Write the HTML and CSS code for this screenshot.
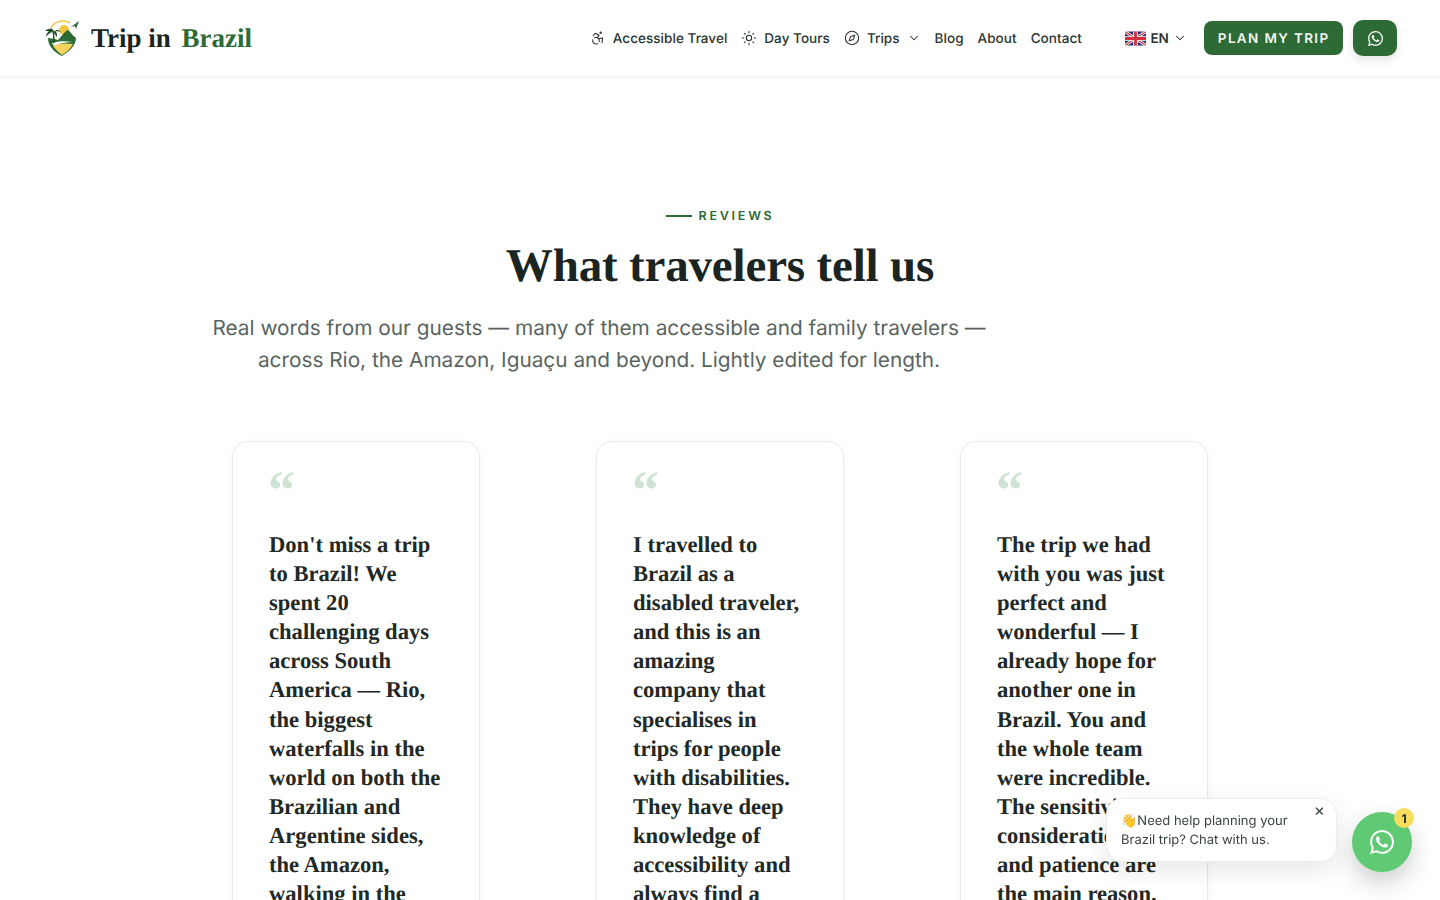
FILE: index.html
```html
<!DOCTYPE html>
<html lang="en">
<head>
<meta charset="utf-8">
<title>Trip in Brazil</title>
<link rel="stylesheet" href="styles.css">
</head>
<body>
<header class="header">
  <a class="logo" href="#">
    <svg class="logo-mark" viewBox="0 0 36 38" width="36" height="38">
      <path d="M6 12C8 5 13 2 19 2c3 0 5 .7 7 2" fill="none" stroke="#e9c64f" stroke-width="1.6"/>
      <circle cx="20" cy="11" r="5" fill="#f2c73f"/>
      <path d="M5 17h26c1 0 2 1 2 2 0 8-7 14-15 18C10 33 3 27 3 19c0-1 1-2 2-2z" fill="#fff"/>
      <path d="M4 19c3 0 7 1 10 2 3-3 7-9 10-10 2 1 4 5 8 8 0 7-6 13-14 18C10 33 4 27 4 19z" fill="#2d6a35"/>
      <path d="M9 27c6-3 12-3 20-2-2 4-6 8-11 11-3-2-6-5-9-9z" fill="#f2d35c"/>
      <path d="M8 24c6-2 13-2 21-1-6 0-13 1-19 4z" fill="#fff"/>
      <path d="M10 24c0-4 0-8-1-11" stroke="#1f4a26" stroke-width="1.4" fill="none"/>
      <path d="M9 12C6 9 3 10 1 12c2 0 3 0 4 .5-2 1-3 3-3 5 2-2 4-4 7-5 1 2 3 3 3.500 6 1-3 .5-5-1-6 2-.5 4 0 5 1-1-3-4-3-6-1-1-2-3-3-5-3 1 1 2 2 2 3.500z" fill="#1f4a26"/>
      <path d="M27 8l8-6-3 8-1-3z" fill="#2d6a35"/>
    </svg>
    <span class="logo-text">Trip in <em>Brazil</em></span>
  </a>
  <nav class="nav">
    <a class="nav-link" href="#">
      <svg class="icon" viewBox="0 0 24 24"><circle cx="16" cy="4" r="1"/><path d="M18 19l1-7-6 1"/><path d="M5 8l3-3 5.500 3-2.360 3.500"/><path d="M4.240 14.500a5 5 0 0 0 6.880 6"/><path d="M13.760 17.500a5 5 0 0 0-6.880-6"/></svg>
      Accessible Travel</a>
    <a class="nav-link" href="#">
      <svg class="icon" viewBox="0 0 24 24"><circle cx="12" cy="12" r="4"/><path d="M12 2v2M12 20v2M4.900 4.900l1.400 1.400M17.700 17.700l1.400 1.400M2 12h2M20 12h2M6.300 17.700l-1.400 1.400M19.100 4.900l-1.400 1.400"/></svg>
      Day Tours</a>
    <a class="nav-link" href="#">
      <svg class="icon" viewBox="0 0 24 24"><circle cx="12" cy="12" r="10"/><path d="M16.240 7.760l-2.120 6.360-6.360 2.120 2.120-6.360z"/></svg>
      Trips
      <svg class="chev" viewBox="0 0 24 24"><path d="M6 9l6 6 6-6"/></svg></a>
    <a class="nav-link" href="#">Blog</a>
    <a class="nav-link" href="#">About</a>
    <a class="nav-link" href="#">Contact</a>
  </nav>
  <div class="lang">
    <svg class="flag" viewBox="0 0 60 40" width="21" height="15">
      <rect width="60" height="40" rx="5" fill="#28306f"/>
      <path d="M0 0l60 40M60 0L0 40" stroke="#fff" stroke-width="8"/>
      <path d="M0 0l60 40M60 0L0 40" stroke="#d2303f" stroke-width="3"/>
      <path d="M30 0v40M0 20h60" stroke="#fff" stroke-width="13"/>
      <path d="M30 0v40M0 20h60" stroke="#d2303f" stroke-width="8"/>
    </svg>
    <span>EN</span>
    <svg class="chev" viewBox="0 0 24 24"><path d="M6 9l6 6 6-6"/></svg>
  </div>
  <a class="cta" href="#">PLAN MY TRIP</a>
  <a class="wa-btn" href="#" aria-label="WhatsApp">
    <svg class="wa-icon" viewBox="0 0 24 24" width="15" height="15"><path d="M17.472 14.382c-.297-.149-1.758-.867-2.03-.967-.273-.099-.471-.148-.67.15-.197.297-.767.966-.94 1.164-.173.199-.347.223-.644.075-.297-.15-1.255-.463-2.39-1.475-.883-.788-1.48-1.761-1.653-2.059-.173-.297-.018-.458.13-.606.134-.133.298-.347.446-.52.149-.174.198-.298.298-.497.099-.198.05-.371-.025-.52-.075-.149-.669-1.612-.916-2.207-.242-.579-.487-.5-.669-.51-.173-.008-.371-.01-.57-.01-.198 0-.52.074-.792.372-.272.297-1.04 1.016-1.04 2.479 0 1.462 1.065 2.875 1.213 3.074.149.198 2.096 3.2 5.077 4.487.709.306 1.262.489 1.694.625.712.227 1.36.195 1.871.118.571-.085 1.758-.719 2.006-1.413.248-.694.248-1.289.173-1.413-.074-.124-.272-.198-.57-.347m-5.421 7.403h-.004a9.87 9.87 0 01-5.031-1.378l-.361-.214-3.741.982.998-3.648-.235-.374a9.86 9.86 0 01-1.51-5.26c.001-5.45 4.436-9.884 9.888-9.884 2.64 0 5.122 1.03 6.988 2.898a9.825 9.825 0 012.893 6.994c-.003 5.45-4.437 9.884-9.885 9.884m8.413-18.297A11.815 11.815 0 0012.05 0C5.495 0 .16 5.335.157 11.892c0 2.096.547 4.142 1.588 5.945L.057 24l6.305-1.654a11.882 11.882 0 005.683 1.448h.005c6.554 0 11.89-5.335 11.893-11.893a11.821 11.821 0 00-3.48-8.413z"/></svg>
  </a>
</header>
<main class="reviews">
  <div class="eyebrow"><span class="eyebrow-line"></span>REVIEWS</div>
  <h1 class="title">What travelers tell us</h1>
  <p class="lead">Real words from our guests — many of them accessible and family travelers — across Rio, the Amazon, Iguaçu and beyond. Lightly edited for length.</p>
  <div class="cards">
    <article class="card">
      <div class="quote-mark">“</div>
      <p class="quote">Don't miss a trip to Brazil! We spent 20 challenging days across South America — Rio, the biggest waterfalls in the world on both the Brazilian and Argentine sides, the Amazon, walking in the</p>
    </article>
    <article class="card">
      <div class="quote-mark">“</div>
      <p class="quote">I travelled to Brazil as a disabled traveler, and this is an amazing company that specialises in trips for people with disabilities. They have deep knowledge of accessibility and always find a</p>
    </article>
    <article class="card">
      <div class="quote-mark">“</div>
      <p class="quote">The trip we had with you was just perfect and wonderful — I already hope for another one in Brazil. You and the whole team were incredible. The sensitivity, consideration<br>and patience are the main reason.</p>
    </article>
  </div>
</main>
<aside class="chat">
  <div class="bubble">
    <span class="bubble-close">×</span>
    <span class="wave">👋</span> Need help planning your Brazil trip? Chat with us.
  </div>
  <a class="fab" href="#" aria-label="WhatsApp chat">
    <svg class="wa-icon" viewBox="0 0 24 24" width="24" height="24"><path d="M17.472 14.382c-.297-.149-1.758-.867-2.03-.967-.273-.099-.471-.148-.67.15-.197.297-.767.966-.94 1.164-.173.199-.347.223-.644.075-.297-.15-1.255-.463-2.39-1.475-.883-.788-1.48-1.761-1.653-2.059-.173-.297-.018-.458.13-.606.134-.133.298-.347.446-.52.149-.174.198-.298.298-.497.099-.198.05-.371-.025-.52-.075-.149-.669-1.612-.916-2.207-.242-.579-.487-.5-.669-.51-.173-.008-.371-.01-.57-.01-.198 0-.52.074-.792.372-.272.297-1.04 1.016-1.04 2.479 0 1.462 1.065 2.875 1.213 3.074.149.198 2.096 3.2 5.077 4.487.709.306 1.262.489 1.694.625.712.227 1.36.195 1.871.118.571-.085 1.758-.719 2.006-1.413.248-.694.248-1.289.173-1.413-.074-.124-.272-.198-.57-.347m-5.421 7.403h-.004a9.87 9.87 0 01-5.031-1.378l-.361-.214-3.741.982.998-3.648-.235-.374a9.86 9.86 0 01-1.51-5.26c.001-5.45 4.436-9.884 9.888-9.884 2.64 0 5.122 1.03 6.988 2.898a9.825 9.825 0 012.893 6.994c-.003 5.45-4.437 9.884-9.885 9.884m8.413-18.297A11.815 11.815 0 0012.05 0C5.495 0 .16 5.335.157 11.892c0 2.096.547 4.142 1.588 5.945L.057 24l6.305-1.654a11.882 11.882 0 005.683 1.448h.005c6.554 0 11.89-5.335 11.893-11.893a11.821 11.821 0 00-3.48-8.413z"/></svg>
    <span class="badge">1</span>
  </a>
</aside>
</body>
</html>
```
FILE: styles.css
```css
* { box-sizing: border-box; }
html, body { margin: 0; height: 100%; overflow: hidden; }
body { background: #fff; color: #1a2420; font-family: Inter, "Liberation Sans", sans-serif; text-rendering: geometricPrecision; }
a { color: inherit; text-decoration: none; }
.header { height: 76px; display: flex; align-items: center; padding: 0 43px 0 44px; background: #fff; box-shadow: 0 1px 4px rgba(20,30,25,.10); position: relative; }
.logo { display: flex; align-items: center; gap: 11px; }
.logo-mark { flex: none; }
.logo-text { font-family: "Liberation Serif", serif; font-weight: 700; font-size: 27px; color: #1a2420; }
.logo-text em { font-style: normal; color: #2d6a35; margin-left: 4px; }
.nav { margin-left: auto; padding-top: 2px; display: flex; align-items: center; gap: 14px; font-size: 13.500px; font-weight: 500; letter-spacing: .05px; color: #2a3430; }
.nav-link { display: flex; align-items: center; gap: 7px; }
.icon { width: 16px; height: 16px; margin-top: -2px; fill: none; stroke: #2a3430; stroke-width: 1.600; stroke-linecap: round; stroke-linejoin: round; }
.chev { width: 14px; height: 14px; margin-top: -2px; fill: none; stroke: #2a3430; stroke-width: 1.800; stroke-linecap: round; stroke-linejoin: round; }
.lang { display: flex; align-items: center; gap: 4.500px; margin-left: 43px; padding-top: 2px; font-size: 13.500px; font-weight: 600; color: #2a3430; }
.flag { border-radius: 2px; margin-top: -2px; }
.cta { margin-left: 17px; height: 34px; padding: 2px 13.500px 0; display: flex; align-items: center; background: #2d6a35; color: #f3f7f3; border-radius: 8px; font-size: 13.500px; font-weight: 600; letter-spacing: 1.350px; }
.wa-btn { margin-left: 10px; width: 44px; height: 36px; display: flex; align-items: center; justify-content: center; background: #2d6a35; border-radius: 10px; box-shadow: 0 4px 10px rgba(20,30,25,.12); }
.wa-icon { fill: #fff; }
.reviews { padding-top: 133px; display: flex; flex-direction: column; align-items: center; }
.eyebrow { display: flex; align-items: center; gap: 7px; font-size: 12.500px; font-weight: 600; letter-spacing: 2.750px; color: #2d6a35; line-height: 16px; }
.eyebrow-line { width: 26px; height: 2px; margin-top: -2px; background: #2d6a35; }
.title { margin: 12px 0 0; font-family: "Liberation Serif", serif; font-size: 47px; font-weight: 700; line-height: 58px; letter-spacing: -.17px; color: #1a2420; }
.lead { align-self: flex-start; margin: 18px 0 0 199px; width: 800px; text-align: center; font-size: 20.800px; line-height: 32px; font-weight: 400; color: #5a6460; }
.cards { width: 976px; margin-top: 64px; display: flex; justify-content: space-between; }
.card { width: 248px; height: 700px; padding: 12px 36px 0; border: 1px solid #e8eaea; border-radius: 16px; box-shadow: 0 2px 12px rgba(20,30,25,.04); }
.quote-mark { margin-left: -1px; font-family: "Liberation Serif", serif; font-size: 54px; line-height: 72px; height: 76px; color: #cfe3d4; font-weight: 700; }
.quote { margin: 0; font-family: "Liberation Serif", serif; font-size: 22.600px; font-weight: 700; line-height: 29.100px; color: #1f2925; }
.chat { position: fixed; right: 28px; bottom: 28px; display: flex; align-items: flex-end; gap: 15px; }
.bubble { position: relative; width: 231px; height: 64px; margin-bottom: 10px; padding: 13px 30px 0 14px; background: #fff; border: 1px solid #eceeed; border-radius: 16px; box-shadow: 0 8px 24px rgba(20,30,25,.10); font-size: 13px; line-height: 19px; color: #3a4440; }
.bubble-close { position: absolute; top: 2px; right: 11px; font-size: 17px; line-height: 20px; color: #3a4440; }
.wave { margin-right: -3.500px; }
.fab { position: relative; width: 60px; height: 60px; border-radius: 50%; display: flex; align-items: center; justify-content: center; background: #5fc974; box-shadow: 0 10px 24px rgba(20,30,25,.22); }
.badge { position: absolute; top: -4px; right: -2px; width: 20px; height: 20px; border-radius: 50%; background: #f6de5c; color: #1a2420; font-size: 12px; font-weight: 700; display: flex; align-items: center; justify-content: center; }
```
